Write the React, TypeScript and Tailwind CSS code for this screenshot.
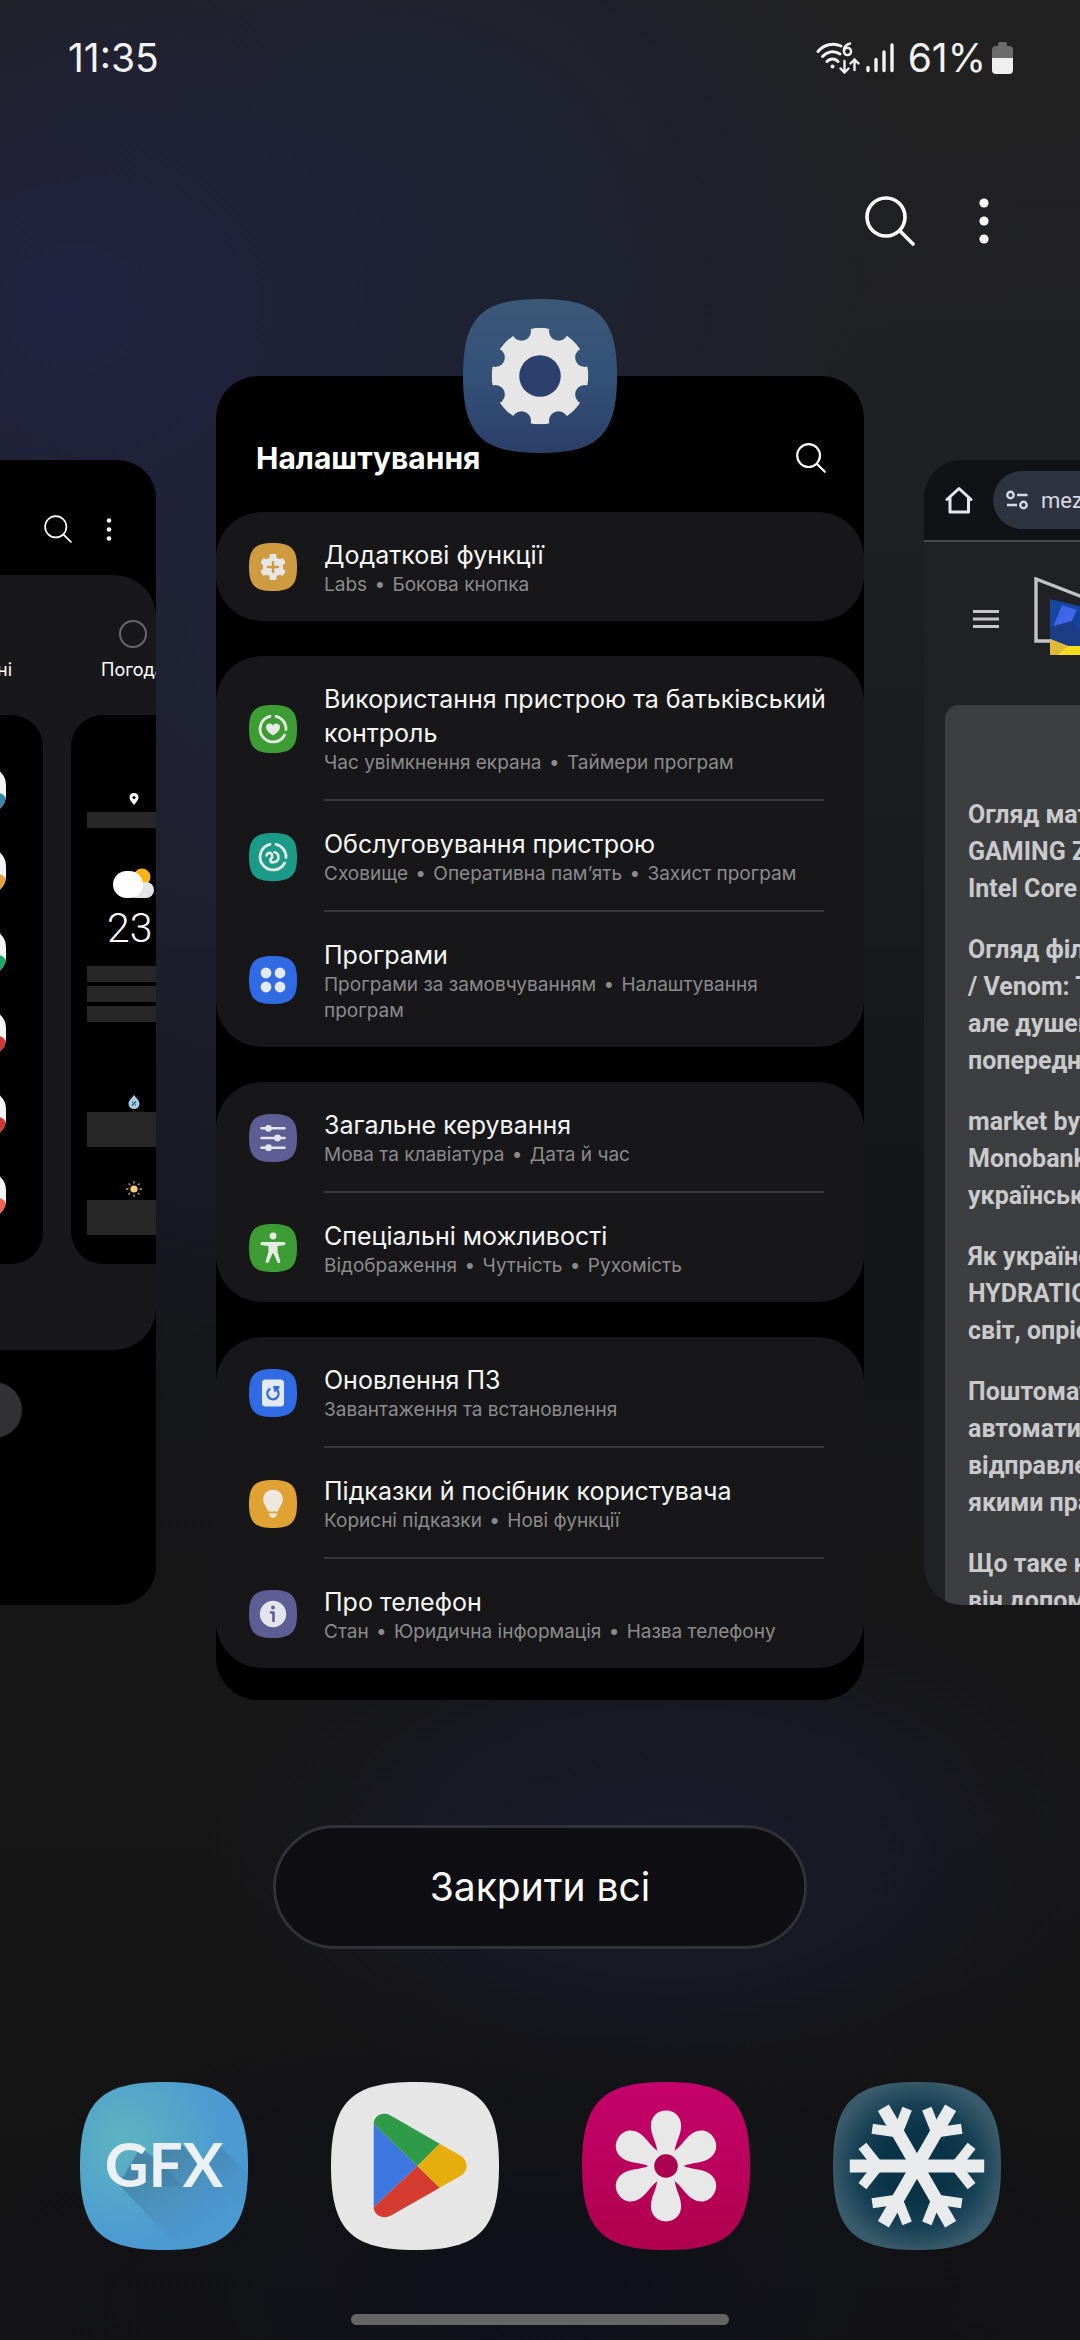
import React, { Fragment, useId } from 'react'

const SQUIRCLE = 'M50 0C12 0 0 12 0 50S12 100 50 100 100 88 100 50 88 0 50 0Z'

function SearchIcon({ className, stroke = 3 }: { className: string; stroke?: number }) {
  return (
    <svg viewBox="0 0 50 50" className={className} fill="none" stroke="currentColor" strokeWidth={stroke} strokeLinecap="round" aria-hidden="true">
      <circle cx="21" cy="21" r="19" />
      <path d="M35 35L48 48" />
    </svg>
  )
}

function MoreIcon({ className }: { className: string }) {
  return (
    <svg viewBox="0 0 10 46" className={className} fill="currentColor" aria-hidden="true">
      <circle cx="5" cy="5" r="4.6" />
      <circle cx="5" cy="23" r="4.6" />
      <circle cx="5" cy="41" r="4.6" />
    </svg>
  )
}

// Gear body with round notches between the teeth
function Gear({ cx, r, teeth, notch, offset }: { cx: number; r: number; teeth: number; notch: number; offset: number }) {
  const id = useId()
  const notches = Array.from({ length: teeth }, (_, i) => ((offset + (i * 360) / teeth) * Math.PI) / 180)

  return (
    <>
      <mask id={id}>
        <circle cx={cx} cy={cx} r={r} fill="white" />
        {notches.map((a) => (
          <circle key={a} cx={cx + r * Math.cos(a)} cy={cx + r * Math.sin(a)} r={notch} fill="black" />
        ))}
      </mask>
      <circle cx={cx} cy={cx} r={r} fill="#e6e6e6" mask={`url(#${id})`} />
    </>
  )
}

function Badge({ color, children }: { color: string; children: React.ReactNode }) {
  return (
    <svg viewBox="0 0 48 48" className="w-12 h-12 shrink-0" aria-hidden="true">
      <path d="M24 0C5.800 0 0 5.800 0 24S5.800 48 24 48 48 42.200 48 24 42.200 0 24 0Z" fill={color} />
      {children}
    </svg>
  )
}

const careRing = (
  <g fill="none" stroke="#e4ece4" strokeWidth="2.800" strokeLinecap="round">
    <path d="M27 11.300A13 13 0 0 1 37 24.500" />
    <path d="M35.600 30A13 13 0 1 1 21 11.300" />
  </g>
)

const groups = [
  [
    {
      title: 'Додаткові функції',
      details: ['Labs', 'Бокова кнопка'],
      icon: (
        <Badge color="#cf9b40">
          <Gear cx={24} r={13.2} teeth={6} notch={3.4} offset={0} />
          <path d="M24 19V29M19 24H29" stroke="#cf9b40" strokeWidth="2.4" strokeLinecap="round" />
        </Badge>
      ),
    },
  ],
  [
    {
      title: 'Використання пристрою та батьківський контроль',
      details: ['Час увімкнення екрана', 'Таймери програм'],
      icon: (
        <Badge color="#3e9c35">
          {careRing}
          <path d="M24 30.500C20.500 28 17 25.500 17 22.200C17 18.300 21.800 17.200 24 20.500C26.200 17.200 31 18.300 31 22.200C31 25.500 27.500 28 24 30.500Z" fill="#e4ece4" />
        </Badge>
      ),
    },
    {
      title: 'Обслуговування пристрою',
      details: ['Сховище', 'Оперативна пам’ять', 'Захист програм'],
      icon: (
        <Badge color="#1a9a87">
          {careRing}
          <path d="M17.500 22.500C18.500 19 22.500 19 23.200 22.500C24 26 20.800 24.800 21.300 27.500C22.300 30.800 29.500 29.500 29.500 24.200C29.500 21.500 27.500 19.800 25.500 19.300" fill="none" stroke="#e4ece4" strokeWidth="2.600" strokeLinecap="round" />
        </Badge>
      ),
    },
    {
      title: 'Програми',
      details: ['Програми за замовчуванням', 'Налаштування програм'],
      icon: (
        <Badge color="#306be4">
          <g fill="#e4e8f2">
            <circle cx="17" cy="17" r="5.400" />
            <circle cx="31" cy="17" r="5.400" />
            <circle cx="17" cy="31" r="5.400" />
            <circle cx="31" cy="31" r="5.400" />
          </g>
        </Badge>
      ),
    },
  ],
  [
    {
      title: 'Загальне керування',
      details: ['Мова та клавіатура', 'Дата й час'],
      icon: (
        <Badge color="#5e5d94">
          <path d="M12.500 14.300H35.500M12.500 24H35.500M12.500 33.700H35.500" stroke="#e4e4ee" strokeWidth="2.600" strokeLinecap="round" />
          <g fill="#e4e4ee">
            <circle cx="19.500" cy="14.300" r="3.400" />
            <circle cx="28.500" cy="24" r="3.400" />
            <circle cx="19.500" cy="33.700" r="3.400" />
          </g>
        </Badge>
      ),
    },
    {
      title: 'Спеціальні можливості',
      details: ['Відображення', 'Чутність', 'Рухомість'],
      icon: (
        <Badge color="#3e9c35">
          <circle cx="24" cy="12" r="3.400" fill="#e4ece4" />
          <path d="M12.800 18H35.200C37 18 37 21 35.200 21.200L28.600 22V28L31.300 37C31.700 39.200 29 40 28.200 38L24.500 29.500H23.500L19.800 38C19 40 16.300 39.200 16.700 37L19.400 28V22L12.800 21.200C11 21 11 18 12.800 18Z" fill="#e4ece4" />
        </Badge>
      ),
    },
  ],
  [
    {
      title: 'Оновлення ПЗ',
      details: ['Завантаження та встановлення'],
      icon: (
        <Badge color="#306be4">
          <rect x="13" y="10.500" width="22" height="27" rx="3.500" fill="#e4e8f2" />
          <path d="M20.500 20.200A5.600 5.600 0 1 0 28.600 21.500" fill="none" stroke="#306be4" strokeWidth="2.400" strokeLinecap="round" />
          <path d="M24 17H30.500V19L25.500 23.500Z" fill="#306be4" />
        </Badge>
      ),
    },
    {
      title: 'Підказки й посібник користувача',
      details: ['Корисні підказки', 'Нові функції'],
      icon: (
        <Badge color="#dfa233">
          <path d="M24 9.800C18.300 9.800 14.200 14 14.200 19.400C14.200 24 17.500 26.200 19.200 31.500H28.800C30.500 26.200 33.800 24 33.800 19.400C33.800 14 29.700 9.800 24 9.800Z" fill="#ece8e0" />
          <path d="M19.800 33.200H28.200C28 35.500 26 37.800 24 37.800S20 35.500 19.800 33.200Z" fill="#ece8e0" />
        </Badge>
      ),
    },
    {
      title: 'Про телефон',
      details: ['Стан', 'Юридична інформація', 'Назва телефону'],
      icon: (
        <Badge color="#5e5d94">
          <circle cx="24" cy="24" r="13.200" fill="#e4e4ee" />
          <circle cx="24" cy="17.500" r="1.900" fill="#5e5d94" />
          <path d="M22 22.500H24.500V31" fill="none" stroke="#5e5d94" strokeWidth="2.600" strokeLinecap="round" strokeLinejoin="round" />
        </Badge>
      ),
    },
  ],
]

const articles = [
  ['Огляд матер', 'GAMING Z79', 'Intel Core i'],
  ['Огляд фільм', '/ Venom: Th', 'але душевн', 'попередні'],
  ['market by R', 'Monobank з', 'українських'],
  ['Як українсь', 'HYDRATION', 'світ, опрісн'],
  ['Поштомати', 'автоматизо', 'відправлен', 'якими прац'],
  ['Що таке ко', 'він допомаг'],
]

function StatusBar() {
  return (
    <div className="flex h-[116px] items-center justify-between pl-[68px] pr-[67px] text-[39px] text-[#f2f2f2]">
      <span>11:35</span>
      <div className="flex items-center gap-[6px]">
        <svg viewBox="0 0 44 32" className="h-8 w-11" fill="none" stroke="currentColor" strokeWidth="3" strokeLinecap="round" aria-label="Wi-Fi" role="img">
          <path d="M2 9.500C8 2.500 17 .500 25 4" />
          <path d="M6.500 14.500C11 9.500 18 8 24 12" />
          <path d="M11 19.500C14 16 19 16 22 19.500" />
          <circle cx="16.500" cy="24.500" r="2" fill="currentColor" stroke="none" />
          <circle cx="31.500" cy="9.500" r="3.600" strokeWidth="2.400" />
          <path d="M28 8.500C28 5 30.500 2.500 34 1.500" strokeWidth="2.400" />
          <path d="M28.500 19V30M24.500 26.500L28.500 30.500L32.500 26.500M38.500 28V18M34.500 21.500L38.500 17.500L42.500 21.500" strokeWidth="2.400" />
        </svg>
        <svg viewBox="0 0 28 32" className="mr-2 h-8 w-7" stroke="currentColor" strokeWidth="3.400" strokeLinecap="round" aria-label="Сигнал" role="img">
          <path d="M2 25.500V28.500M10 17.500V28.500M18 10V28.500M26 3V28.500" />
        </svg>
        <span>61%</span>
        <svg viewBox="0 0 21 32" className="h-8 w-[21px]" aria-hidden="true">
          <path d="M6 2Q6 0 8 0H13Q15 0 15 2V4H17Q21 4 21 8V17H0V8Q0 4 4 4H6Z" fill="#6b6b6c" />
          <path d="M0 16H21V28Q21 32 17 32H4Q0 32 0 28Z" fill="#efefef" />
        </svg>
      </div>
    </div>
  )
}

function SettingsCard() {
  return (
    <section className="relative w-[648px] shrink-0 rounded-[42px] bg-black pb-8">
      <svg viewBox="0 0 100 100" className="absolute left-1/2 top-0 h-[154px] w-[154px] -translate-x-1/2 -translate-y-1/2" aria-hidden="true">
        <defs>
          <linearGradient id="settings-bg" x1="0" y1="0" x2="0" y2="1">
            <stop offset="0" stopColor="#3c5877" />
            <stop offset="0.500" stopColor="#345178" />
            <stop offset="1" stopColor="#2b3f69" />
          </linearGradient>
        </defs>
        <path d={SQUIRCLE} fill="url(#settings-bg)" />
        <Gear cx={50} r={31.4} teeth={8} notch={6.2} offset={22.5} />
        <circle cx="50" cy="50" r="13.500" fill="#2c406d" />
      </svg>
      <div className="flex h-[136px] items-center justify-between pl-10 pr-[38px] pt-7">
        <h1 className="text-[30px] font-bold leading-10 text-white">Налаштування</h1>
        <button type="button" aria-label="Пошук" className="text-white">
          <SearchIcon className="h-[30px] w-[30px]" stroke={3.6} />
        </button>
      </div>
      <div className="flex flex-col gap-[35px]">
        {groups.map((items) => (
          <ul key={items[0].title} className="rounded-[46px] bg-[#171719]">
            {items.map((item, i) => (
              <li key={item.title}>
                <a href="#" className="flex items-center gap-[27px] pl-[33px] pr-10">
                  {item.icon}
                  <span className={`flex flex-1 flex-col pt-[26px] pb-[23px] ${i < items.length - 1 ? 'border-b-2 border-[#37373a]' : ''}`}>
                    <span className="-mr-4 text-[25px] leading-[34px] text-[#f7f7f7]">{item.title}</span>
                    <span className="text-[19px] leading-[26px] text-[#8b8b8d]">
                      {item.details.map((part, n) => (
                        <Fragment key={part}>
                          {n > 0 && <span className="px-0.5"> • </span>}
                          {part}
                        </Fragment>
                      ))}
                    </span>
                  </span>
                </a>
              </li>
            ))}
          </ul>
        ))}
      </div>
    </section>
  )
}

function AppChip({ color }: { color: string }) {
  return (
    <div className="flex h-[46px] w-[52px] items-end justify-end overflow-hidden rounded-[18px] bg-[#f4f4f4]">
      <span className={`h-5 w-5 rounded-lg ${color}`} />
    </div>
  )
}

function WidgetsCard() {
  return (
    <section className="mt-[84px] flex h-[1145px] w-[560px] shrink-0 flex-col overflow-hidden rounded-[38px] bg-black text-white">
      <div className="flex h-[115px] items-center justify-end gap-8 pr-[42px] pt-[23px]">
        <button type="button" aria-label="Пошук">
          <SearchIcon className="h-7 w-7" />
        </button>
        <button type="button" aria-label="Більше">
          <MoreIcon className="h-[23px] w-[10px]" />
        </button>
      </div>
      <div className="flex h-[775px] flex-col rounded-[42px] bg-[#18181a] pt-[45px]">
        <div className="flex h-[95px] justify-end text-[18px] leading-6">
          <span className="mr-[80px] mt-[38px]">ні</span>
          <span className="-mr-[18px] flex w-[82px] flex-col items-center gap-[10px]">
            <span className="h-7 w-7 rounded-full border-2 border-[#68686a]" />
            Погода
          </span>
        </div>
        <div className="flex h-[549px] justify-end gap-7">
          <div className="flex w-[300px] flex-col items-end gap-[35px] rounded-[32px] bg-black pr-[37px] pt-[52px]">
            <AppChip color="bg-[#3787aa]" />
            <AppChip color="bg-[#e3a03f]" />
            <AppChip color="bg-[#1fa566]" />
            <AppChip color="bg-[#cf3935]" />
            <AppChip color="bg-[#cf3935]" />
            <AppChip color="bg-[#f25f55]" />
          </div>
          <div className="-mr-[34px] flex w-[119px] flex-col rounded-[32px] bg-black pl-4 pt-[78px]">
            <svg viewBox="0 0 10 12" className="ml-[42px] h-3 w-[10px]" aria-hidden="true">
              <path d="M5 0C2 0 .500 2 .500 4.500C.500 7.500 3 9 5 12C7 9 9.500 7.500 9.500 4.500C9.500 2 8 0 5 0Z" fill="#fff" />
              <circle cx="5" cy="4.500" r="1.600" fill="#000" />
            </svg>
            <span className="mt-[7px] h-4 bg-[#272727]" />
            <svg viewBox="0 0 42 31" className="ml-[26px] mt-10 h-[31px] w-[42px]" aria-hidden="true">
              <circle cx="29" cy="9" r="8.500" fill="#f9b418" />
              <rect x="15" y="14" width="26" height="16" rx="8" fill="#e4e4e4" />
              <rect x="0" y="3" width="30" height="27" rx="13.500" fill="#fdfdfd" />
            </svg>
            <span className="ml-5 mt-2 font-[Roboto] text-[41px] font-light leading-[42px]">23</span>
            <span className="mt-[17px] h-4 bg-[#272727]" />
            <span className="mt-1 h-4 bg-[#272727]" />
            <span className="mt-1 h-4 bg-[#272727]" />
            <svg viewBox="0 0 12 14" className="ml-[41px] mt-[73px] h-[14px] w-3" aria-hidden="true">
              <path d="M6 0C4 3 .500 5.500 .500 8.700A5.500 5.300 0 0 0 11.500 8.700C11.500 5.500 8 3 6 0Z" fill="#a9cfe6" />
              <path d="M4 10.500L8 6.500M4 7H5M7 10H8" stroke="#24597a" strokeWidth="1.400" />
            </svg>
            <span className="mt-[3px] h-[35px] bg-[#272727]" />
            <svg viewBox="0 0 16 16" className="ml-[39px] mt-[34px] h-4 w-4" aria-hidden="true">
              <circle cx="8" cy="8" r="3.600" fill="#f7cf72" />
              <path d="M8 0V2.500M8 13.500V16M0 8H2.500M13.500 8H16M2.500 2.500L4 4M12 12L13.500 13.500M2.500 13.500L4 12M12 4L13.500 2.500" stroke="#c9a14e" strokeWidth="1.300" />
            </svg>
            <span className="mt-[3px] h-[35px] bg-[#272727]" />
          </div>
        </div>
      </div>
      <div className="flex justify-end pr-[134px] pt-8">
        <span className="h-14 w-60 rounded-full bg-[#323234]" />
      </div>
    </section>
  )
}

function BrowserCard() {
  return (
    <section className="mt-[84px] flex h-[1145px] w-[560px] shrink-0 flex-col overflow-hidden whitespace-nowrap rounded-[38px] bg-[#202124] font-[Roboto]">
      <div className="flex h-[82px] shrink-0 items-center border-b-2 border-[#4a4b4f] bg-[#101216] pl-[21px]">
        <svg viewBox="0 0 28 28" className="h-7 w-7" fill="none" stroke="#e4e6ee" strokeWidth="3" strokeLinejoin="round" strokeLinecap="round" aria-hidden="true">
          <path d="M2 13.500L14 2.500L26 13.500M5 12V26H23.500V12" />
        </svg>
        <div className="ml-5 flex h-[58px] flex-1 items-center gap-[13px] rounded-l-full bg-[#2e3340] pl-[13px] text-[22px] text-[#d5d9e4]">
          <svg viewBox="0 0 22 20" className="h-5 w-[22px]" fill="none" stroke="currentColor" strokeWidth="2.400" aria-hidden="true">
            <circle cx="4.500" cy="5" r="3.200" />
            <path d="M11 5H21.500M1 15H11" />
            <circle cx="17.500" cy="15" r="3.200" />
          </svg>
          mezha.media
        </div>
      </div>
      <div className="flex h-[163px] shrink-0 items-start pl-[49px] pt-[35px]">
        <svg viewBox="0 0 26 18" className="mt-[33px] h-[18px] w-[26px]" stroke="#c6c6c6" strokeWidth="3" aria-hidden="true">
          <path d="M0 1.500H26M0 9H26M0 16.500H26" />
        </svg>
        <svg viewBox="0 0 90 80" className="ml-[35px] h-20 w-[90px]" aria-hidden="true">
          <path d="M20 64H2V2L90 36" fill="none" stroke="#c4c4c4" strokeWidth="3.400" />
          <path d="M16 22L90 40V78H16Z" fill="#1646a0" />
          <path d="M28 28L43 33L38 44L19 50Z" fill="#3f66ea" />
          <path d="M43 33L60 37L66 60L38 44Z" fill="#12459a" />
          <path d="M16 50L38 44L56 68L30 69L16 62Z" fill="#1c3c86" />
          <path d="M16 62L34 69H90V78H16Z" fill="#f6dc1c" />
          <path d="M16 62L34 69L24 78H16Z" fill="#dfb83a" />
        </svg>
      </div>
      <div className="ml-[21px] flex flex-1 flex-col gap-6 rounded-tl-[14px] bg-[#3d3e40] pl-[23px] pt-[91px] text-[25px] font-bold leading-[37px] text-[#c9cacb]">
        {articles.map((lines) => (
          <p key={lines[0]}>
            {lines.map((line) => (
              <span key={line} className="block">{line}</span>
            ))}
          </p>
        ))}
      </div>
    </section>
  )
}

function DockIcon({ label, children }: { label: string; children: React.ReactNode }) {
  return (
    <a href="#" aria-label={label}>
      <svg viewBox="0 0 100 100" className="h-[168px] w-[168px]">{children}</svg>
    </a>
  )
}

function Dock() {
  return (
    <nav className="mt-[133px] grid grid-cols-4 justify-items-center px-[38px]">
      <DockIcon label="GFX">
        <defs>
          <radialGradient id="gfx-bg" cx="0.270" cy="0.350" r="0.600">
            <stop offset="0" stopColor="#5db4bf" />
            <stop offset="1" stopColor="#4b9ad2" />
          </radialGradient>
          <linearGradient id="gfx-shadow" gradientUnits="userSpaceOnUse" x1="45" y1="45" x2="76" y2="92">
            <stop offset="0" stopColor="#3f7599" stopOpacity="0.700" />
            <stop offset="1" stopColor="#4787b8" stopOpacity="0" />
          </linearGradient>
          <clipPath id="gfx-clip">
            <path d={SQUIRCLE} />
          </clipPath>
        </defs>
        <path d={SQUIRCLE} fill="url(#gfx-bg)" />
        <g fill="url(#gfx-shadow)" clipPath="url(#gfx-clip)">
          <path d="M23 61L36 39L48 48L61 62L96 97V110H70Z" />
          <path d="M44 38H61L72 50L61 62H48Z" />
          <path d="M61 62L83 38L112 66V110H108Z" />
        </g>
        <text x="50" y="62.500" textAnchor="middle" className="font-[Lato] text-[36px] font-bold" fill="#eaf0f3">GFX</text>
      </DockIcon>
      <DockIcon label="Play">
        <path d={SQUIRCLE} fill="#e6e6e6" />
        <path d="M25.400 24.800V74.600L51.500 50Z" fill="#3d77df" />
        <path d="M25.400 24.800L51.500 50L64.700 36.700L36 20.200C30.500 17 25.400 20.500 25.400 24.800Z" fill="#2f9a47" />
        <path d="M25.400 74.600L51.500 50L64.700 62.900L36 79.300C30.500 82.300 25.400 79 25.400 74.600Z" fill="#d33c2e" />
        <path d="M64.700 36.700L77 43.700C82 46.700 82 53 77 56L64.700 62.900L51.500 50Z" fill="#e6ae0c" />
      </DockIcon>
      <DockIcon label="Галерея">
        <defs>
          <linearGradient id="gallery-bg" x1="0" y1="0" x2="0" y2="1">
            <stop offset="0" stopColor="#c5026b" />
            <stop offset="1" stopColor="#b0014d" />
          </linearGradient>
        </defs>
        <path d={SQUIRCLE} fill="url(#gallery-bg)" />
        {[0, 60, 120, 180, 240, 300].map((deg) => (
          <path key={deg} transform={`rotate(${deg} 50 50)`} d="M50 17C44.500 17 41 21 41 26C41 31.500 44 35 44.800 41L50 50L55.200 41C56 35 59 31.500 59 26C59 21 55.500 17 50 17Z" fill="#e8e8e8" />
        ))}
        <circle cx="50" cy="50" r="9.500" fill="#e8e8e8" />
        <circle cx="50" cy="50" r="7" fill="#aa0150" />
      </DockIcon>
      <DockIcon label="Сніжинка">
        <defs>
          <radialGradient id="snow-bg" cx="0.500" cy="0.500" r="0.560">
            <stop offset="0.350" stopColor="#0b3348" />
            <stop offset="0.650" stopColor="#174055" />
            <stop offset="0.920" stopColor="#3a5b6b" />
          </radialGradient>
        </defs>
        <path d={SQUIRCLE} fill="url(#snow-bg)" />
        {[0, 60, 120, 180, 240, 300].map((deg) => (
          <g key={deg} transform={`rotate(${deg} 50 50)`} fill="none" stroke="#e8eaeb">
            <path d="M50 50H90" strokeWidth="7.600" />
            <path d="M82.500 38L73 50L82.500 62" strokeWidth="6" />
          </g>
        ))}
      </DockIcon>
    </nav>
  )
}

export default function App() {
  return (
    <div className="min-h-screen overflow-hidden bg-[#141416] bg-[radial-gradient(ellipse_380px_320px_at_6%_13%,#222342_0%,transparent_100%),radial-gradient(ellipse_520px_420px_at_36%_9%,#1e2236_0%,transparent_100%),radial-gradient(ellipse_560px_800px_at_22%_26%,#202238_0%,transparent_100%),radial-gradient(ellipse_460px_260px_at_62%_79%,#191b2c_0%,transparent_100%),radial-gradient(ellipse_600px_300px_at_50%_98%,#101119_0%,transparent_100%),linear-gradient(180deg,#212121_0%,#1f2024_22%,#151619_50%,#171717_75%,#131314_100%)] font-[Inter,'Noto_Sans',sans-serif]">
      <StatusBar />
      <div className="flex items-center justify-end gap-16 pr-[91px] pt-20 text-white">
        <button type="button" aria-label="Пошук">
          <SearchIcon className="h-[50px] w-[50px]" stroke={3.6} />
        </button>
        <button type="button" aria-label="Більше">
          <MoreIcon className="h-[46px] w-[10px]" />
        </button>
      </div>
      <main className="flex items-start justify-center gap-[60px] overflow-hidden pt-[130px]">
        <WidgetsCard />
        <SettingsCard />
        <BrowserCard />
      </main>
      <div className="mt-[125px] flex justify-center">
        <button type="button" className="h-[124px] w-[534px] rounded-full border-[3px] border-[#313137] bg-[#0e0e13] text-[39px] text-white">
          Закрити всі
        </button>
      </div>
      <Dock />
      <div className="mx-auto mt-16 mb-[15px] h-[11px] w-[35%] rounded-full bg-[#656567]" />
    </div>
  )
}
